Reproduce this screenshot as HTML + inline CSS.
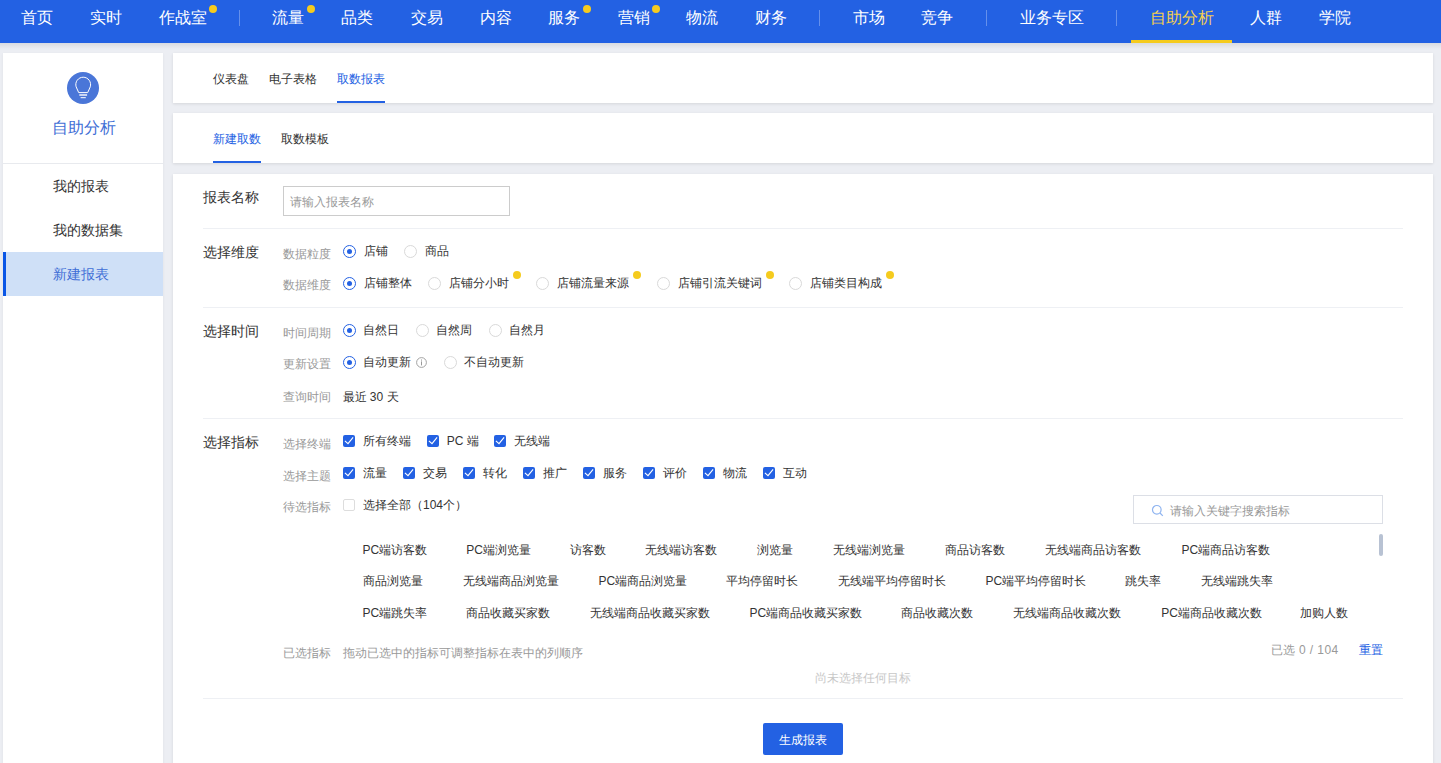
<!DOCTYPE html>
<html><head><meta charset="utf-8"><title>自助分析</title>
<style>
html,body{margin:0;padding:0;}
body{width:1441px;height:763px;overflow:hidden;position:relative;background:#eceef3;font-family:"Liberation Sans",sans-serif;}
.a{position:absolute;box-sizing:content-box;}
.t{position:absolute;white-space:nowrap;}
</style></head><body>
<div class="a" style="left:0;top:0;width:1441px;height:43px;background:#2361e3;"></div>
<div class="t" style="left:20.5px;top:10.0px;font-size:16px;line-height:16px;color:#fff;">首页</div>
<div class="t" style="left:89.5px;top:10.0px;font-size:16px;line-height:16px;color:#fff;">实时</div>
<div class="t" style="left:158.5px;top:10.0px;font-size:16px;line-height:16px;color:#fff;">作战室</div>
<div class="a" style="left:209px;top:5px;width:8px;height:8px;border-radius:50%;background:#f5cb1e;"></div>
<div class="t" style="left:272.0px;top:10.0px;font-size:16px;line-height:16px;color:#fff;">流量</div>
<div class="a" style="left:307px;top:5px;width:8px;height:8px;border-radius:50%;background:#f5cb1e;"></div>
<div class="t" style="left:341.2px;top:10.0px;font-size:16px;line-height:16px;color:#fff;">品类</div>
<div class="t" style="left:410.5px;top:10.0px;font-size:16px;line-height:16px;color:#fff;">交易</div>
<div class="t" style="left:480.0px;top:10.0px;font-size:16px;line-height:16px;color:#fff;">内容</div>
<div class="t" style="left:548.2px;top:10.0px;font-size:16px;line-height:16px;color:#fff;">服务</div>
<div class="a" style="left:583px;top:5px;width:8px;height:8px;border-radius:50%;background:#f5cb1e;"></div>
<div class="t" style="left:617.5px;top:10.0px;font-size:16px;line-height:16px;color:#fff;">营销</div>
<div class="a" style="left:652px;top:5px;width:8px;height:8px;border-radius:50%;background:#f5cb1e;"></div>
<div class="t" style="left:685.5px;top:10.0px;font-size:16px;line-height:16px;color:#fff;">物流</div>
<div class="t" style="left:754.5px;top:10.0px;font-size:16px;line-height:16px;color:#fff;">财务</div>
<div class="t" style="left:853.3px;top:10.0px;font-size:16px;line-height:16px;color:#fff;">市场</div>
<div class="t" style="left:921.2px;top:10.0px;font-size:16px;line-height:16px;color:#fff;">竞争</div>
<div class="t" style="left:1019.5px;top:10.0px;font-size:16px;line-height:16px;color:#fff;">业务专区</div>
<div class="t" style="left:1150.3px;top:10.0px;font-size:16px;line-height:16px;color:#f3cf4e;">自助分析</div>
<div class="t" style="left:1249.5px;top:10.0px;font-size:16px;line-height:16px;color:#fff;">人群</div>
<div class="t" style="left:1318.9px;top:10.0px;font-size:16px;line-height:16px;color:#fff;">学院</div>
<div class="a" style="left:239px;top:10px;width:1px;height:16px;background:rgba(255,255,255,.3);"></div>
<div class="a" style="left:819px;top:10px;width:1px;height:16px;background:rgba(255,255,255,.3);"></div>
<div class="a" style="left:986px;top:10px;width:1px;height:16px;background:rgba(255,255,255,.3);"></div>
<div class="a" style="left:1116px;top:10px;width:1px;height:16px;background:rgba(255,255,255,.3);"></div>
<div class="a" style="left:1131px;top:40px;width:101px;height:3px;background:#f5cb1e;"></div>
<div class="a" style="left:0;top:43px;width:1441px;height:6px;background:linear-gradient(rgba(0,0,0,.08),rgba(0,0,0,0));"></div>
<div class="a" style="left:3px;top:53px;width:160px;height:720px;background:#fff;box-shadow:0 1px 3px rgba(0,0,0,.06);"></div>
<div class="a" style="left:3px;top:163px;width:160px;height:1px;background:#e8eaee;"></div>
<div class="a" style="left:66.5px;top:72px;width:32px;height:32px;border-radius:50%;background:#4a76d8;"></div>
<svg class="a" style="left:66.5px;top:72px" width="32" height="32" viewBox="0 0 32 32"><path d="M11.7 20.6 L9.13 14.8 A7.4 7.4 0 1 1 23.27 14.8 L20.7 20.6 Z" fill="none" stroke="#fff" stroke-width="1"/><path d="M12.3 23 H20.1" stroke="#fff" stroke-width="1.4"/><path d="M13.6 25.7 H18.8" stroke="#fff" stroke-width="1"/></svg>
<div class="t" style="left:51.5px;top:120.4px;font-size:16px;line-height:16px;color:#3f6fd6;">自助分析</div>
<div class="t" style="left:52.5px;top:179.0px;font-size:14px;line-height:14px;color:#333;">我的报表</div>
<div class="t" style="left:52.5px;top:223.0px;font-size:14px;line-height:14px;color:#333;">我的数据集</div>
<div class="a" style="left:3px;top:252px;width:160px;height:44px;background:#cfe0f7;"></div>
<div class="a" style="left:3px;top:252px;width:3px;height:44px;background:#0a56e6;"></div>
<div class="t" style="left:52.5px;top:267.0px;font-size:14px;line-height:14px;color:#3f6fd6;">新建报表</div>
<div class="a" style="left:173px;top:53px;width:1260px;height:50px;background:#fff;box-shadow:0 1px 3px rgba(0,0,0,.1);"></div>
<div class="t" style="left:213.0px;top:72.7px;font-size:12px;line-height:12px;color:#333;">仪表盘</div>
<div class="t" style="left:269.0px;top:72.7px;font-size:12px;line-height:12px;color:#333;">电子表格</div>
<div class="t" style="left:337.0px;top:72.7px;font-size:12px;line-height:12px;color:#2361e3;">取数报表</div>
<div class="a" style="left:337px;top:101px;width:48px;height:2px;background:#2361e3;"></div>
<div class="a" style="left:173px;top:113px;width:1260px;height:50px;background:#fff;box-shadow:0 1px 3px rgba(0,0,0,.1);"></div>
<div class="t" style="left:213.0px;top:132.7px;font-size:12px;line-height:12px;color:#2361e3;">新建取数</div>
<div class="t" style="left:281.0px;top:132.7px;font-size:12px;line-height:12px;color:#333;">取数模板</div>
<div class="a" style="left:213px;top:161px;width:48px;height:2px;background:#2361e3;"></div>
<div class="a" style="left:173px;top:174px;width:1260px;height:600px;background:#fff;box-shadow:0 1px 3px rgba(0,0,0,.1);"></div>
<div class="t" style="left:202.5px;top:190.0px;font-size:14px;line-height:14px;color:#333;">报表名称</div>
<div class="a" style="left:283px;top:186px;width:225px;height:28px;border:1px solid #ccc;background:#fff;"></div>
<div class="t" style="left:290.0px;top:195.8px;font-size:12px;line-height:12px;color:#999;">请输入报表名称</div>
<div class="a" style="left:203px;top:228px;width:1200px;height:1px;background:#eef0f4;"></div>
<div class="a" style="left:203px;top:307px;width:1200px;height:1px;background:#eef0f4;"></div>
<div class="a" style="left:203px;top:418px;width:1200px;height:1px;background:#eef0f4;"></div>
<div class="a" style="left:203px;top:698px;width:1200px;height:1px;background:#eef0f4;"></div>
<div class="t" style="left:202.5px;top:245.0px;font-size:14px;line-height:14px;color:#333;">选择维度</div>
<div class="t" style="left:282.5px;top:247.5px;font-size:12px;line-height:12px;color:#999;">数据粒度</div>
<div class="a" style="left:343px;top:245.0px;width:11px;height:11px;border:1px solid #2361e3;border-radius:50%;box-sizing:content-box;"><div class="a" style="left:3px;top:3px;width:5px;height:5px;border-radius:50%;background:#2361e3"></div></div>
<div class="t" style="left:363.5px;top:244.8px;font-size:12px;line-height:12px;color:#333;">店铺</div>
<div class="a" style="left:404px;top:245.0px;width:11px;height:11px;border:1px solid #d9d9d9;border-radius:50%;"></div>
<div class="t" style="left:424.6px;top:244.8px;font-size:12px;line-height:12px;color:#333;">商品</div>
<div class="t" style="left:282.5px;top:279.4px;font-size:12px;line-height:12px;color:#999;">数据维度</div>
<div class="a" style="left:343px;top:276.9px;width:11px;height:11px;border:1px solid #2361e3;border-radius:50%;box-sizing:content-box;"><div class="a" style="left:3px;top:3px;width:5px;height:5px;border-radius:50%;background:#2361e3"></div></div>
<div class="t" style="left:363.5px;top:276.6px;font-size:12px;line-height:12px;color:#333;">店铺整体</div>
<div class="a" style="left:428.3px;top:276.9px;width:11px;height:11px;border:1px solid #d9d9d9;border-radius:50%;"></div>
<div class="t" style="left:448.8px;top:276.6px;font-size:12px;line-height:12px;color:#333;">店铺分小时</div>
<div class="a" style="left:512.8px;top:271px;width:8px;height:8px;border-radius:50%;background:#f5cb1e;"></div>
<div class="a" style="left:536px;top:276.9px;width:11px;height:11px;border:1px solid #d9d9d9;border-radius:50%;"></div>
<div class="t" style="left:556.5px;top:276.6px;font-size:12px;line-height:12px;color:#333;">店铺流量来源</div>
<div class="a" style="left:632.5px;top:271px;width:8px;height:8px;border-radius:50%;background:#f5cb1e;"></div>
<div class="a" style="left:657px;top:276.9px;width:11px;height:11px;border:1px solid #d9d9d9;border-radius:50%;"></div>
<div class="t" style="left:677.5px;top:276.6px;font-size:12px;line-height:12px;color:#333;">店铺引流关键词</div>
<div class="a" style="left:765.5px;top:271px;width:8px;height:8px;border-radius:50%;background:#f5cb1e;"></div>
<div class="a" style="left:789px;top:276.9px;width:11px;height:11px;border:1px solid #d9d9d9;border-radius:50%;"></div>
<div class="t" style="left:809.5px;top:276.6px;font-size:12px;line-height:12px;color:#333;">店铺类目构成</div>
<div class="a" style="left:885.5px;top:271px;width:8px;height:8px;border-radius:50%;background:#f5cb1e;"></div>
<div class="t" style="left:202.5px;top:324.0px;font-size:14px;line-height:14px;color:#333;">选择时间</div>
<div class="t" style="left:282.5px;top:326.5px;font-size:12px;line-height:12px;color:#999;">时间周期</div>
<div class="a" style="left:343px;top:324.0px;width:11px;height:11px;border:1px solid #2361e3;border-radius:50%;box-sizing:content-box;"><div class="a" style="left:3px;top:3px;width:5px;height:5px;border-radius:50%;background:#2361e3"></div></div>
<div class="t" style="left:363.0px;top:323.7px;font-size:12px;line-height:12px;color:#333;">自然日</div>
<div class="a" style="left:416px;top:324.0px;width:11px;height:11px;border:1px solid #d9d9d9;border-radius:50%;"></div>
<div class="t" style="left:436.0px;top:323.7px;font-size:12px;line-height:12px;color:#333;">自然周</div>
<div class="a" style="left:489px;top:324.0px;width:11px;height:11px;border:1px solid #d9d9d9;border-radius:50%;"></div>
<div class="t" style="left:509.0px;top:323.7px;font-size:12px;line-height:12px;color:#333;">自然月</div>
<div class="t" style="left:282.5px;top:358.4px;font-size:12px;line-height:12px;color:#999;">更新设置</div>
<div class="a" style="left:343px;top:356.0px;width:11px;height:11px;border:1px solid #2361e3;border-radius:50%;box-sizing:content-box;"><div class="a" style="left:3px;top:3px;width:5px;height:5px;border-radius:50%;background:#2361e3"></div></div>
<div class="t" style="left:363.0px;top:355.7px;font-size:12px;line-height:12px;color:#333;">自动更新</div>
<svg class="a" style="left:416px;top:356.5px" width="11" height="11" viewBox="0 0 11 11"><circle cx="5.5" cy="5.5" r="4.9" fill="none" stroke="#999" stroke-width="0.9"/><rect x="5" y="2.5" width="1" height="1.1" fill="#999"/><rect x="5" y="4.4" width="1" height="4" fill="#999"/></svg>
<div class="a" style="left:444px;top:356.0px;width:11px;height:11px;border:1px solid #d9d9d9;border-radius:50%;"></div>
<div class="t" style="left:463.5px;top:355.7px;font-size:12px;line-height:12px;color:#333;">不自动更新</div>
<div class="t" style="left:282.5px;top:390.8px;font-size:12px;line-height:12px;color:#999;">查询时间</div>
<div class="t" style="left:342.5px;top:390.5px;font-size:12px;line-height:12px;color:#333;">最近 30 天</div>
<div class="t" style="left:202.5px;top:434.8px;font-size:14px;line-height:14px;color:#333;">选择指标</div>
<div class="t" style="left:282.5px;top:438.0px;font-size:12px;line-height:12px;color:#999;">选择终端</div>
<div class="a" style="left:343px;top:435px;width:12px;height:12px;background:#2361e3;border-radius:2px;"><svg class="a" style="left:0;top:0" width="12" height="12" viewBox="0 0 12 12"><path d="M1.9 5.9 L5 8.7 L10.1 2.4" fill="none" stroke="#fff" stroke-width="1.1"/></svg></div>
<div class="t" style="left:363.0px;top:435.0px;font-size:12px;line-height:12px;color:#333;">所有终端</div>
<div class="a" style="left:426.8px;top:435px;width:12px;height:12px;background:#2361e3;border-radius:2px;"><svg class="a" style="left:0;top:0" width="12" height="12" viewBox="0 0 12 12"><path d="M1.9 5.9 L5 8.7 L10.1 2.4" fill="none" stroke="#fff" stroke-width="1.1"/></svg></div>
<div class="t" style="left:446.8px;top:435.0px;font-size:12px;line-height:12px;color:#333;">PC 端</div>
<div class="a" style="left:493.75px;top:435px;width:12px;height:12px;background:#2361e3;border-radius:2px;"><svg class="a" style="left:0;top:0" width="12" height="12" viewBox="0 0 12 12"><path d="M1.9 5.9 L5 8.7 L10.1 2.4" fill="none" stroke="#fff" stroke-width="1.1"/></svg></div>
<div class="t" style="left:513.8px;top:435.0px;font-size:12px;line-height:12px;color:#333;">无线端</div>
<div class="t" style="left:282.5px;top:469.5px;font-size:12px;line-height:12px;color:#999;">选择主题</div>
<div class="a" style="left:343px;top:467px;width:12px;height:12px;background:#2361e3;border-radius:2px;"><svg class="a" style="left:0;top:0" width="12" height="12" viewBox="0 0 12 12"><path d="M1.9 5.9 L5 8.7 L10.1 2.4" fill="none" stroke="#fff" stroke-width="1.1"/></svg></div>
<div class="t" style="left:363.0px;top:467.0px;font-size:12px;line-height:12px;color:#333;">流量</div>
<div class="a" style="left:403px;top:467px;width:12px;height:12px;background:#2361e3;border-radius:2px;"><svg class="a" style="left:0;top:0" width="12" height="12" viewBox="0 0 12 12"><path d="M1.9 5.9 L5 8.7 L10.1 2.4" fill="none" stroke="#fff" stroke-width="1.1"/></svg></div>
<div class="t" style="left:423.0px;top:467.0px;font-size:12px;line-height:12px;color:#333;">交易</div>
<div class="a" style="left:463px;top:467px;width:12px;height:12px;background:#2361e3;border-radius:2px;"><svg class="a" style="left:0;top:0" width="12" height="12" viewBox="0 0 12 12"><path d="M1.9 5.9 L5 8.7 L10.1 2.4" fill="none" stroke="#fff" stroke-width="1.1"/></svg></div>
<div class="t" style="left:483.0px;top:467.0px;font-size:12px;line-height:12px;color:#333;">转化</div>
<div class="a" style="left:523px;top:467px;width:12px;height:12px;background:#2361e3;border-radius:2px;"><svg class="a" style="left:0;top:0" width="12" height="12" viewBox="0 0 12 12"><path d="M1.9 5.9 L5 8.7 L10.1 2.4" fill="none" stroke="#fff" stroke-width="1.1"/></svg></div>
<div class="t" style="left:543.0px;top:467.0px;font-size:12px;line-height:12px;color:#333;">推广</div>
<div class="a" style="left:583px;top:467px;width:12px;height:12px;background:#2361e3;border-radius:2px;"><svg class="a" style="left:0;top:0" width="12" height="12" viewBox="0 0 12 12"><path d="M1.9 5.9 L5 8.7 L10.1 2.4" fill="none" stroke="#fff" stroke-width="1.1"/></svg></div>
<div class="t" style="left:603.0px;top:467.0px;font-size:12px;line-height:12px;color:#333;">服务</div>
<div class="a" style="left:643px;top:467px;width:12px;height:12px;background:#2361e3;border-radius:2px;"><svg class="a" style="left:0;top:0" width="12" height="12" viewBox="0 0 12 12"><path d="M1.9 5.9 L5 8.7 L10.1 2.4" fill="none" stroke="#fff" stroke-width="1.1"/></svg></div>
<div class="t" style="left:663.0px;top:467.0px;font-size:12px;line-height:12px;color:#333;">评价</div>
<div class="a" style="left:703px;top:467px;width:12px;height:12px;background:#2361e3;border-radius:2px;"><svg class="a" style="left:0;top:0" width="12" height="12" viewBox="0 0 12 12"><path d="M1.9 5.9 L5 8.7 L10.1 2.4" fill="none" stroke="#fff" stroke-width="1.1"/></svg></div>
<div class="t" style="left:723.0px;top:467.0px;font-size:12px;line-height:12px;color:#333;">物流</div>
<div class="a" style="left:763px;top:467px;width:12px;height:12px;background:#2361e3;border-radius:2px;"><svg class="a" style="left:0;top:0" width="12" height="12" viewBox="0 0 12 12"><path d="M1.9 5.9 L5 8.7 L10.1 2.4" fill="none" stroke="#fff" stroke-width="1.1"/></svg></div>
<div class="t" style="left:783.0px;top:467.0px;font-size:12px;line-height:12px;color:#333;">互动</div>
<div class="t" style="left:282.5px;top:501.0px;font-size:12px;line-height:12px;color:#999;">待选指标</div>
<div class="a" style="left:343px;top:499px;width:10px;height:10px;border:1px solid #ddd;border-radius:2px;background:#fff;"></div>
<div class="t" style="left:363.0px;top:499.0px;font-size:12px;line-height:12px;color:#333;">选择全部（104个）</div>
<div class="a" style="left:1133px;top:495px;width:248px;height:27px;border:1px solid #dcdfe6;background:#fff;"></div>
<svg class="a" style="left:1151px;top:504px" width="13" height="13" viewBox="0 0 13 13"><circle cx="5.8" cy="5.8" r="4.3" fill="none" stroke="#8fb4f0" stroke-width="1.2"/><path d="M9 9 L11.8 11.8" stroke="#8fb4f0" stroke-width="1.2"/></svg>
<div class="t" style="left:1169.6px;top:504.8px;font-size:12px;line-height:12px;color:#999;">请输入关键字搜索指标</div>
<div class="a" style="left:1379px;top:534px;width:4px;height:22px;border-radius:2px;background:#b8c2d3;"></div>
<div class="t" style="left:362.5px;top:544.0px;font-size:12px;line-height:12px;color:#333;">PC端访客数</div>
<div class="t" style="left:466.2px;top:544.0px;font-size:12px;line-height:12px;color:#333;">PC端浏览量</div>
<div class="t" style="left:569.5px;top:544.0px;font-size:12px;line-height:12px;color:#333;">访客数</div>
<div class="t" style="left:645.3px;top:544.0px;font-size:12px;line-height:12px;color:#333;">无线端访客数</div>
<div class="t" style="left:756.5px;top:544.0px;font-size:12px;line-height:12px;color:#333;">浏览量</div>
<div class="t" style="left:832.8px;top:544.0px;font-size:12px;line-height:12px;color:#333;">无线端浏览量</div>
<div class="t" style="left:945.3px;top:544.0px;font-size:12px;line-height:12px;color:#333;">商品访客数</div>
<div class="t" style="left:1045.0px;top:544.0px;font-size:12px;line-height:12px;color:#333;">无线端商品访客数</div>
<div class="t" style="left:1181.5px;top:544.0px;font-size:12px;line-height:12px;color:#333;">PC端商品访客数</div>
<div class="t" style="left:362.5px;top:575.4px;font-size:12px;line-height:12px;color:#333;">商品浏览量</div>
<div class="t" style="left:462.5px;top:575.4px;font-size:12px;line-height:12px;color:#333;">无线端商品浏览量</div>
<div class="t" style="left:598.5px;top:575.4px;font-size:12px;line-height:12px;color:#333;">PC端商品浏览量</div>
<div class="t" style="left:725.9px;top:575.4px;font-size:12px;line-height:12px;color:#333;">平均停留时长</div>
<div class="t" style="left:837.5px;top:575.4px;font-size:12px;line-height:12px;color:#333;">无线端平均停留时长</div>
<div class="t" style="left:985.5px;top:575.4px;font-size:12px;line-height:12px;color:#333;">PC端平均停留时长</div>
<div class="t" style="left:1124.5px;top:575.4px;font-size:12px;line-height:12px;color:#333;">跳失率</div>
<div class="t" style="left:1201.0px;top:575.4px;font-size:12px;line-height:12px;color:#333;">无线端跳失率</div>
<div class="t" style="left:362.5px;top:607.3px;font-size:12px;line-height:12px;color:#333;">PC端跳失率</div>
<div class="t" style="left:466.2px;top:607.3px;font-size:12px;line-height:12px;color:#333;">商品收藏买家数</div>
<div class="t" style="left:589.5px;top:607.3px;font-size:12px;line-height:12px;color:#333;">无线端商品收藏买家数</div>
<div class="t" style="left:749.5px;top:607.3px;font-size:12px;line-height:12px;color:#333;">PC端商品收藏买家数</div>
<div class="t" style="left:900.9px;top:607.3px;font-size:12px;line-height:12px;color:#333;">商品收藏次数</div>
<div class="t" style="left:1013.4px;top:607.3px;font-size:12px;line-height:12px;color:#333;">无线端商品收藏次数</div>
<div class="t" style="left:1161.3px;top:607.3px;font-size:12px;line-height:12px;color:#333;">PC端商品收藏次数</div>
<div class="t" style="left:1300.2px;top:607.3px;font-size:12px;line-height:12px;color:#333;">加购人数</div>
<div class="t" style="left:283.0px;top:646.8px;font-size:12px;line-height:12px;color:#999;">已选指标</div>
<div class="t" style="left:342.5px;top:646.8px;font-size:12px;line-height:12px;color:#999;">拖动已选中的指标可调整指标在表中的列顺序</div>
<div class="t" style="left:1270.5px;top:643.5px;font-size:12px;line-height:12px;color:#999;letter-spacing:0.4px;">已选 0 / 104</div>
<div class="t" style="left:1358.7px;top:643.8px;font-size:12px;line-height:12px;color:#2361e3;">重置</div>
<div class="t" style="left:815.0px;top:671.5px;font-size:12px;line-height:12px;color:#c8c8c8;">尚未选择任何目标</div>
<div class="a" style="left:763px;top:723px;width:80px;height:32px;border-radius:2px;background:#2361e3;"></div>
<div class="t" style="left:779.0px;top:733.9px;font-size:12px;line-height:12px;color:#fff;">生成报表</div>
</body></html>
